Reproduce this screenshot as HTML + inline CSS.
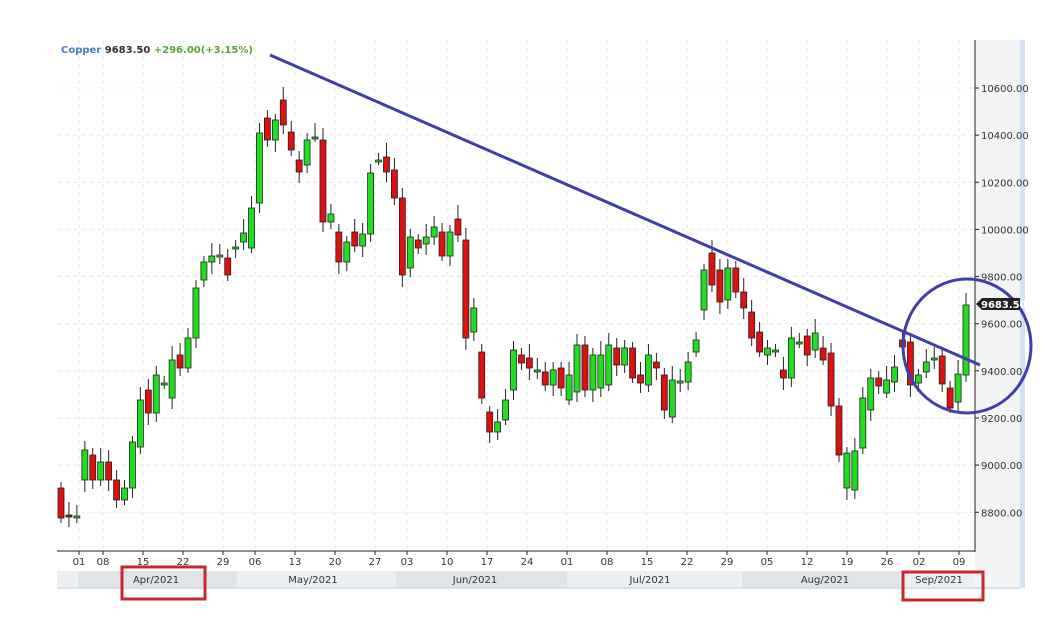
<!DOCTYPE html>
<html><head><meta charset="utf-8"><style>
body{margin:0;background:#fff;width:1060px;height:626px;overflow:hidden;font-family:"DejaVu Sans","Liberation Sans",sans-serif}
</style></head><body>
<svg id="s" width="1060" height="626" xmlns="http://www.w3.org/2000/svg" style="position:absolute;left:0;top:0">
<rect x="975" y="40" width="46" height="548" fill="#f3f4f6"/>
<rect x="1020" y="40" width="5" height="548" fill="#d3e2f2"/>
<g id="grid"></g>
<line x1="975" y1="40" x2="975" y2="552" stroke="#222" stroke-width="1"/>
<line x1="57" y1="551" x2="975" y2="551" stroke="#222" stroke-width="1"/>
<rect x="57" y="571" width="918" height="16" fill="#eeeff1"/>
<g fill="#e2e3e5">
<rect x="78" y="571" width="159" height="16"/><rect x="396" y="571" width="171" height="16"/><rect x="742" y="571" width="158" height="16"/>
</g>
<line x1="57" y1="588" x2="1021" y2="588" stroke="#d3e2f2" stroke-width="2"/>
<g id="ax" font-size="10" fill="#333"></g>
<g font-size="10" fill="#333" text-anchor="middle">
<text x="156" y="583">Apr/2021</text><text x="313" y="583">May/2021</text><text x="475" y="583">Jun/2021</text><text x="650" y="583">Jul/2021</text><text x="825" y="583">Aug/2021</text><text x="939" y="583">Sep/2021</text>
</g>
<g id="c"></g>
<line x1="270" y1="55" x2="980" y2="365" stroke="#3f3fab" stroke-width="3"/>
<ellipse cx="967" cy="346" rx="64" ry="67" fill="none" stroke="#3f3fab" stroke-width="3"/>
<path d="M976 304 L982 298 L1020 298 L1020 310 L982 310 Z" fill="#222"/>
<text x="981" y="308" font-size="10" fill="#fff" font-weight="bold">9683.50</text>
<rect x="122" y="567" width="83" height="32" fill="none" stroke="#c8282e" stroke-width="3"/>
<rect x="903" y="572" width="80" height="28" fill="none" stroke="#c8282e" stroke-width="3"/>
<text x="61" y="53" font-size="10" font-weight="bold"><tspan fill="#4a7ccc">Copper</tspan> <tspan fill="#333">9683.50</tspan> <tspan fill="#5aa532">+296.00(+3.15%)</tspan></text>
</svg>
<script>
var NS="http://www.w3.org/2000/svg";
function el(p,t,a,txt){var e=document.createElementNS(NS,t);for(var k in a)e.setAttribute(k,a[k]);if(txt)e.textContent=txt;document.getElementById(p).appendChild(e);}
var xs=[79,103,143,183,223,255,295,335,375,407,447,487,527,567,607,647,687,727,767,807,847,887,919,959];
var lb=["01","08","15","22","29","06","13","20","27","03","10","17","24","01","08","15","22","29","05","12","19","26","02","09"];
xs.forEach(function(x,i){el("grid","line",{x1:x,y1:40,x2:x,y2:551,stroke:"#e6e6e6","stroke-dasharray":"4,4"});el("ax","text",{x:x,y:565,"text-anchor":"middle"},lb[i]);el("ax","line",{x1:x,y1:551,x2:x,y2:555,stroke:"#222"});});
for(var p=8800;p<=10600;p+=200){var y=88+(10600-p)*0.2357;el("grid","line",{x1:57,y1:y,x2:975,y2:y,stroke:"#e6e6e6","stroke-dasharray":"4,4"});el("ax","text",{x:981,y:y+4},p.toFixed(2));el("ax","line",{x1:975,y1:y,x2:979,y2:y,stroke:"#222"});}
var d=[[488,518],[515,517],[516,516],[480,450],[455,480],[480,462],[462,480],[480,500],[500,488],[488,442],[447,400],[390,413],[413,375],[383,383],[398,360],[355,368],[368,338],[338,288],[280,262],[262,256],[255,255],[258,275],[247,247],[242,233],[248,208],[203,133],[118,140],[140,120],[100,125],[132,150],[160,172],[165,140],[137,137],[140,222],[222,214],[232,262],[262,242],[232,246],[246,234],[234,173],[160,160],[157,172],[170,198],[198,275],[268,237],[240,248],[244,237],[237,227],[232,256],[256,232],[219,235],[240,338],[332,308],[352,398],[412,432],[432,422],[420,400],[390,350],[355,363],[358,368],[370,370],[372,385],[385,370],[368,388],[400,375],[392,345],[345,390],[390,355],[388,355],[385,345],[348,365],[365,348],[348,378],[375,383],[385,355],[362,368],[375,410],[417,380],[381,381],[382,362],[352,340],[310,270],[253,285],[270,302],[300,268],[268,292],[292,308],[312,338],[332,352],[355,348],[350,350],[370,378],[378,338],[342,342],[336,355],[350,333],[348,360],[353,406],[406,455],[488,453],[490,451],[448,398],[410,378],[378,386],[393,380],[382,367],[340,347],[342,385],[383,375],[372,362],[358,358],[356,384],[388,408],[402,374],[375,305]];
var n=d.length,x0=61,step=(966-61)/(n-1);
d.forEach(function(c,i){var x=x0+i*step,o=c[0],cl=c[1],top=Math.min(o,cl),bot=Math.max(o,cl),up=cl<o;
el("c","line",{x1:x,y1:top-6-(i*7%9),x2:x,y2:bot+5+(i*5%8),stroke:"#222","stroke-width":1});
el("c","rect",{x:x-3,y:top,width:6,height:Math.max(2,bot-top),fill:up?"#22dd22":(o==cl?"#22dd22":"#dd1111"),stroke:"#222","stroke-width":0.8});});
</script>
</body></html>
